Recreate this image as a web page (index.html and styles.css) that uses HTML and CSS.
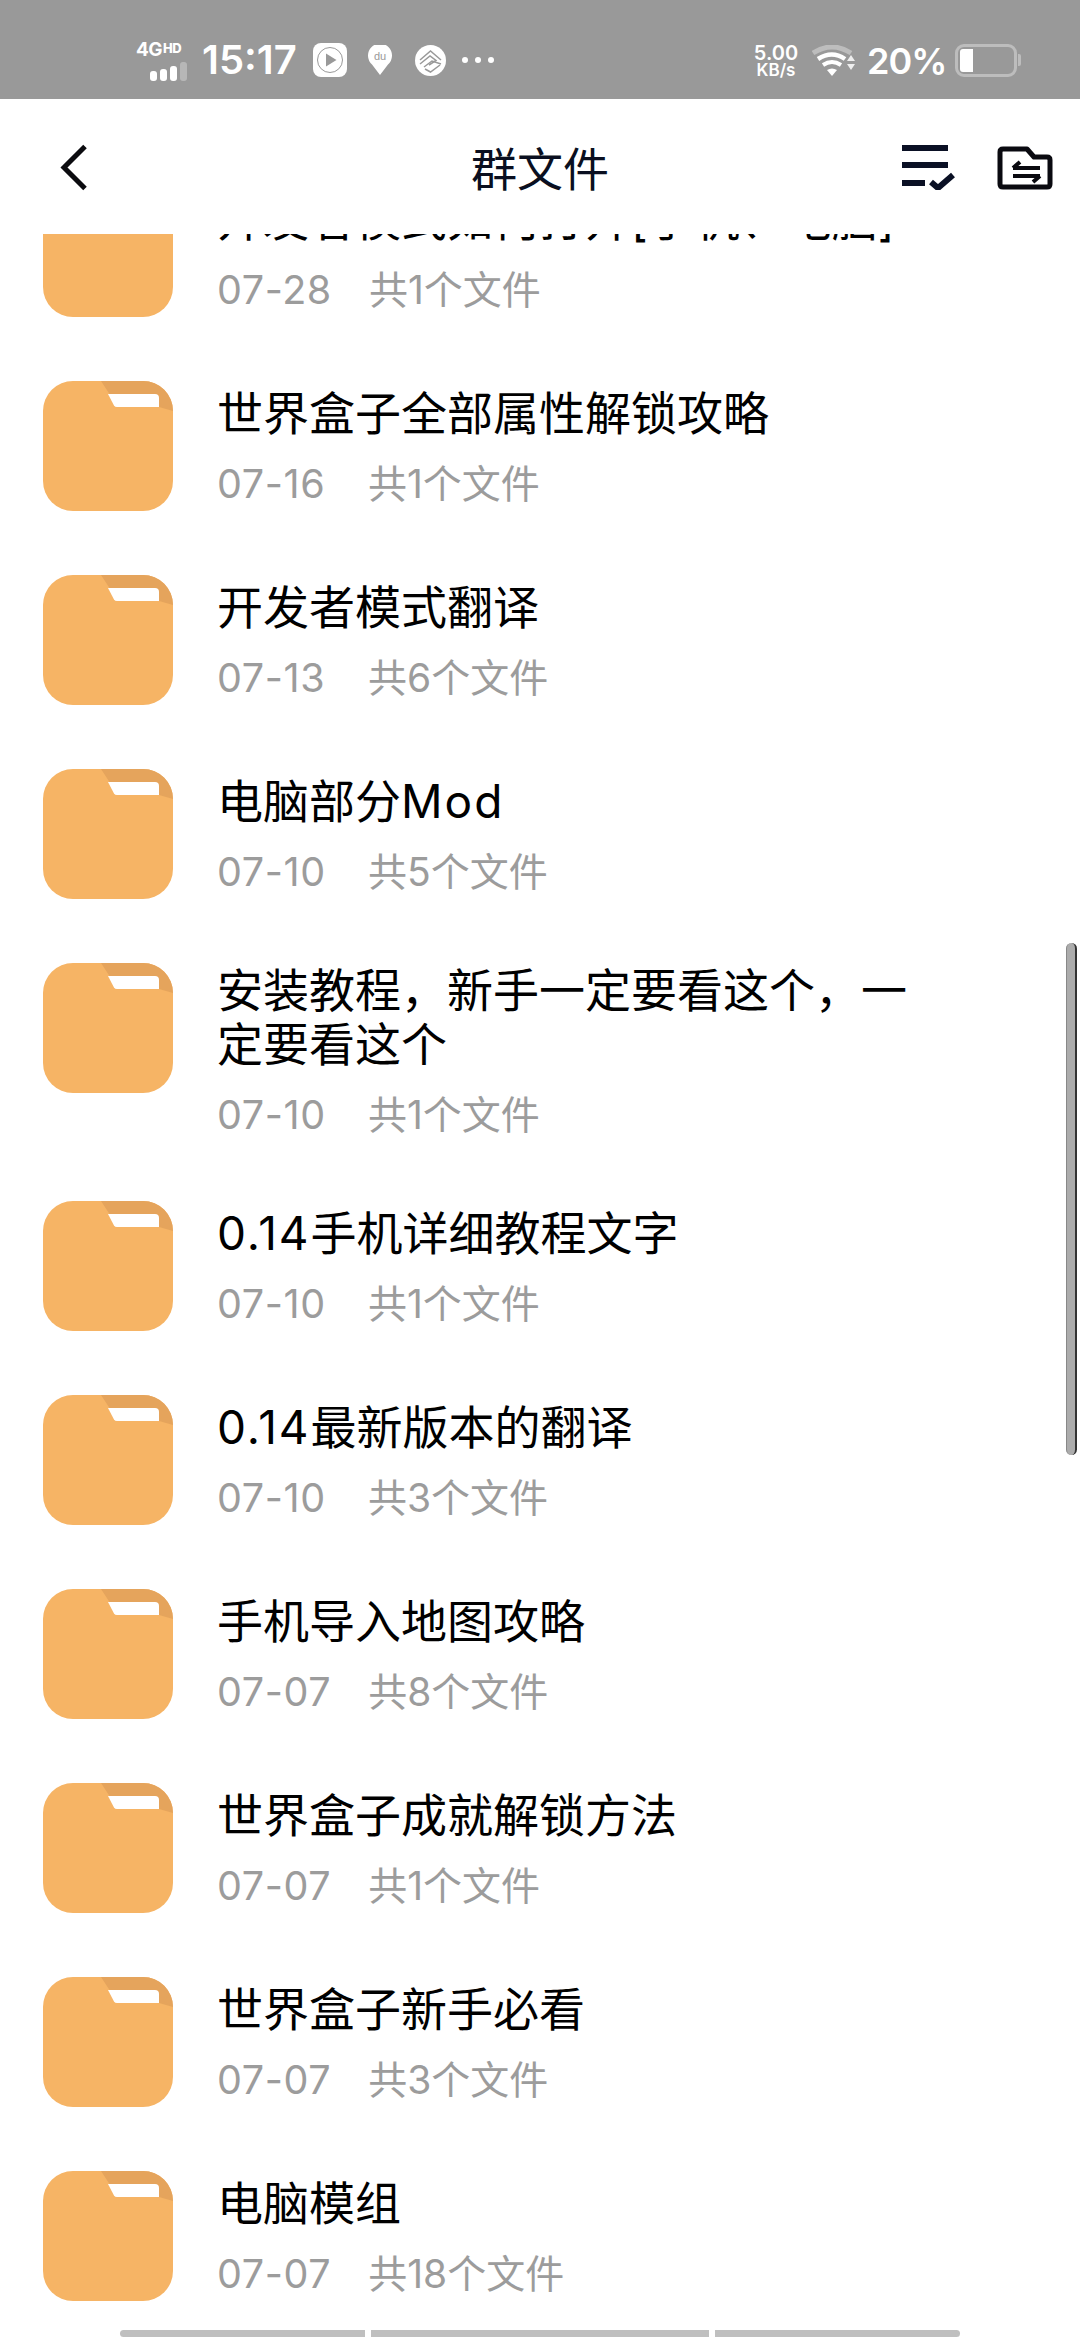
FILE: index.html
```html
<!DOCTYPE html>
<html lang="zh">
<head>
<meta charset="utf-8">
<title>群文件</title>
<link rel="stylesheet" href="styles.css">
</head>
<body>
<svg class="defs" width="0" height="0" aria-hidden="true">
  <symbol id="folder" viewBox="0 0 130 130">
    <path d="M30 0H100A30 30 0 0 1 130 30V100A30 30 0 0 1 100 130H30A30 30 0 0 1 0 100V30A30 30 0 0 1 30 0Z" fill="#f6b465"/>
    <path d="M58 0H100A30 30 0 0 1 130 30V30L116 26H75Z" fill="#e5a45c"/>
    <path d="M65 13H112Q116 13 116 17V26H74Q72 26 71 24.500Z" fill="#fff"/>
  </symbol>
</svg>
<div class="phone">
  <div class="status">
    <div class="signal">
      <div class="net">4G<span class="hd">HD</span></div>
      <div class="bars"><i class="b1"></i><i class="b2"></i><i class="b3"></i><i class="b4"></i></div>
    </div>
    <span class="time">15:17</span>
    <svg class="s-play" width="34" height="34" viewBox="0 0 34 34"><rect width="34" height="34" rx="8" fill="#fff"/><circle cx="17" cy="17" r="12.500" fill="none" stroke="#999" stroke-width="1"/><path d="M13 10.500L23.500 17L13 23.500Z" fill="#999"/></svg>
    <svg class="s-pin" width="24" height="30" viewBox="0 0 24 30"><path d="M12 30L4 19.500A12 12 0 1 1 20 19.500Z" fill="#fff"/><text x="12" y="15" class="du">du</text></svg>
    <svg class="s-cm" width="31" height="31" viewBox="0 0 31 31"><circle cx="15.500" cy="15.500" r="15.500" fill="#fff"/><g fill="none" stroke="#999" stroke-width="1.500"><path d="M5 15L15.500 6L26 15"/><path d="M5 19L15 11L21 15.500L14 20"/><path d="M9 22L17 16L26 19"/><path d="M10 24L15.500 27L25 20"/></g></svg>
    <div class="dots"><i></i><i></i><i></i></div>
    <div class="status-right">
      <div class="speed"><span class="sp1">5.00</span><span class="sp2">KB/s</span></div>
      <svg class="s-wifi" width="43" height="31" viewBox="0 0 43 31">
        <path d="M1 8Q20 -4 39 8" fill="none" stroke="#bdbdbd" stroke-width="5"/>
        <path d="M6 14Q20 5 33 14" fill="none" stroke="#fff" stroke-width="4.500"/>
        <path d="M11 20Q20 14 29 20" fill="none" stroke="#fff" stroke-width="4"/>
        <path d="M15 25Q20 22 25 25L20 31Z" fill="#fff"/>
        <path d="M35 16L39 10L43 16ZM35 19H43L39 25Z" fill="#eee"/>
      </svg>
      <span class="pct">20%</span>
      <div class="battery"><div class="bat-fill"></div></div>
      <div class="bat-cap"></div>
    </div>
  </div>

  <header class="nav">
    <svg class="nav-back" width="28" height="47" viewBox="0 0 28 47"><path d="M25 2.500L4 23.500L25 44.500" fill="none" stroke="#0b0b0f" stroke-width="5"/></svg>
    <h1 class="nav-title">群文件</h1>
    <div class="nav-actions">
      <svg width="55" height="46" viewBox="0 0 55 46"><g fill="none" stroke="#0a1024" stroke-width="6"><path d="M1 4H47"/><path d="M1 21H47"/><path d="M1 39H24"/></g><path d="M30 38L37 44L52 31" fill="none" stroke="#0a1024" stroke-width="6"/></svg>
      <svg class="nav-folder" width="56" height="44" viewBox="0 0 56 44"><path d="M3 6Q3 3 6 3H30L37 11H50Q53 11 53 14V38Q53 41 50 41H6Q3 41 3 38Z" fill="none" stroke="#0a0a10" stroke-width="5" stroke-linejoin="round"/><path d="M16 22H43M23 16L16 22M16 30H43M36 36L43 30" fill="none" stroke="#0a0a10" stroke-width="4"/></svg>
    </div>
  </header>

  <main class="viewport">
    <ul class="list">
      <li class="row"><svg class="ficon"><use href="#folder"/></svg><div class="text"><div class="name">开发者模式如何打开[手机、电脑]</div><div class="meta"><span class="date">07-28</span><span>共1个文件</span></div></div></li>
      <li class="row"><svg class="ficon"><use href="#folder"/></svg><div class="text"><div class="name">世界盒子全部属性解锁攻略</div><div class="meta"><span class="date">07-16</span><span>共1个文件</span></div></div></li>
      <li class="row"><svg class="ficon"><use href="#folder"/></svg><div class="text"><div class="name">开发者模式翻译</div><div class="meta"><span class="date">07-13</span><span>共6个文件</span></div></div></li>
      <li class="row"><svg class="ficon"><use href="#folder"/></svg><div class="text"><div class="name">电脑部分<span class="lat">Mod</span></div><div class="meta"><span class="date">07-10</span><span>共5个文件</span></div></div></li>
      <li class="row"><svg class="ficon"><use href="#folder"/></svg><div class="text"><div class="name">安装教程，新手一定要看这个，一定要看这个</div><div class="meta"><span class="date">07-10</span><span>共1个文件</span></div></div></li>
      <li class="row"><svg class="ficon"><use href="#folder"/></svg><div class="text"><div class="name"><span class="lat">0.14</span>手机详细教程文字</div><div class="meta"><span class="date">07-10</span><span>共1个文件</span></div></div></li>
      <li class="row"><svg class="ficon"><use href="#folder"/></svg><div class="text"><div class="name"><span class="lat">0.14</span>最新版本的翻译</div><div class="meta"><span class="date">07-10</span><span>共3个文件</span></div></div></li>
      <li class="row"><svg class="ficon"><use href="#folder"/></svg><div class="text"><div class="name">手机导入地图攻略</div><div class="meta"><span class="date">07-07</span><span>共8个文件</span></div></div></li>
      <li class="row"><svg class="ficon"><use href="#folder"/></svg><div class="text"><div class="name">世界盒子成就解锁方法</div><div class="meta"><span class="date">07-07</span><span>共1个文件</span></div></div></li>
      <li class="row"><svg class="ficon"><use href="#folder"/></svg><div class="text"><div class="name">世界盒子新手必看</div><div class="meta"><span class="date">07-07</span><span>共3个文件</span></div></div></li>
      <li class="row"><svg class="ficon"><use href="#folder"/></svg><div class="text"><div class="name">电脑模组</div><div class="meta"><span class="date">07-07</span><span>共18个文件</span></div></div></li>
    </ul>
    <div class="scrollbar"></div>
    <div class="tabs"><i class="tab t1"></i><i class="tab t2"></i><i class="tab t3"></i></div>
  </main>
</div>
</body>
</html>
```

FILE: styles.css
```css
* { box-sizing: border-box; margin: 0; padding: 0; }
html, body { width: 1080px; height: 2340px; overflow: hidden; background: #fff; }
body { font-family: Inter, "Noto Sans CJK SC", sans-serif; }
.defs { position: absolute; }
.phone { width: 1080px; height: 2340px; display: flex; flex-direction: column; }

.status { height: 99px; flex: none; background: #999; color: #fff; display: flex; align-items: center; padding: 21px 59px 0 136px; }
.signal { width: 54px; height: 33px; display: flex; flex-direction: column; margin-top: -1px; }
.net { font-size: 19px; line-height: 14px; font-weight: 700; letter-spacing: -.5px; white-space: nowrap; display: flex; align-items: flex-start; }
.hd { font-size: 13px; line-height: 11px; font-weight: 800; margin-left: 1px; }
.bars { display: flex; align-items: flex-end; gap: 3px; margin: 5px 0 0 14px; height: 19px; }
.bars i { width: 7px; border-radius: 3px; background: #fff; display: block; }
.b1 { height: 10px; }
.b2 { height: 12px; }
.b3 { height: 15px; }
.b4 { height: 19px; opacity: .3; }
.time { font-size: 40px; line-height: 40px; font-weight: 600; margin-left: 12px; width: 99px; }
.s-play { margin-left: 12px; }
.s-pin { margin-left: 21px; }
.s-cm { margin-left: 23px; }
.du { font-family: "Liberation Sans", sans-serif; font-size: 11px; fill: #999; text-anchor: middle; }
.dots { display: flex; gap: 7px; margin-left: 16px; }
.dots i { width: 6px; height: 6px; border-radius: 50%; background: #fff; display: block; }
.status-right { margin-left: auto; display: flex; align-items: center; }
.speed { width: 46px; display: flex; flex-direction: column; align-items: center; font-weight: 600; margin-top: 1px; }
.sp1 { font-size: 20px; line-height: 19px; }
.sp2 { font-size: 17px; line-height: 15px; }
.s-wifi { margin-left: 13px; }
.pct { font-size: 36px; line-height: 36px; font-weight: 600; margin-left: 12px; width: 75px; margin-top: 2px; letter-spacing: -1px; }
.battery { width: 62px; height: 33px; margin-left: 13px; border: 3px solid #bdbdbd; border-radius: 9px; padding: 2px; }
.bat-fill { width: 13px; height: 100%; background: #fff; border-radius: 3px 0 0 3px; }
.bat-cap { width: 3px; height: 12px; background: #bdbdbd; border-radius: 0 2px 2px 0; margin-left: 1px; }

.nav { height: 135px; flex: none; background: #fff; display: grid; grid-template-columns: 1fr auto 1fr; align-items: center; padding: 0 27px; position: relative; z-index: 1; }
.nav-back { display: block; margin: 1px 0 0 33px; }
.nav-title { font-family: "Noto Sans CJK SC", sans-serif; font-size: 46px; line-height: 54px; font-weight: 400; color: #0a0f20; margin-top: -2px; }
.nav-actions { display: flex; justify-content: flex-end; align-items: center; gap: 41px; }
.nav-folder { margin-top: 2px; }

.viewport { flex: 1; position: relative; overflow: hidden; }
.list { list-style: none; margin-top: -79px; }
.row { display: flex; min-height: 194px; padding-left: 43px; }
.ficon { width: 130px; height: 130px; flex: none; margin-top: 32px; }
.text { flex: 1; display: flex; flex-direction: column; justify-content: center; padding: 32px 0; margin-left: 44px; }
.name { font-family: Inter, "Noto Sans CJK SC", sans-serif; font-size: 46px; line-height: 54px; color: #000; max-width: 720px; }
.lat { letter-spacing: 2px; }
.meta { display: flex; gap: 37px; font-size: 39px; line-height: 44px; color: #9c9c9c; margin-top: 22px; }
.date { font-size: 39.5px; letter-spacing: .6px; min-width: 114px; }

.scrollbar { position: absolute; left: 1066px; top: 709px; width: 11px; height: 512px; border-radius: 6px; background: #acacac; border-left: 1px solid #888; border-right: 2px solid #333; }
.tabs { position: absolute; left: 120px; top: 2096px; display: flex; gap: 6px; }
.tab { display: block; height: 7px; background: #bfbfbf; }
.t1 { width: 245px; border-radius: 4px 0 0 4px; }
.t2 { width: 338px; }
.t3 { width: 245px; border-radius: 0 4px 4px 0; }
```
